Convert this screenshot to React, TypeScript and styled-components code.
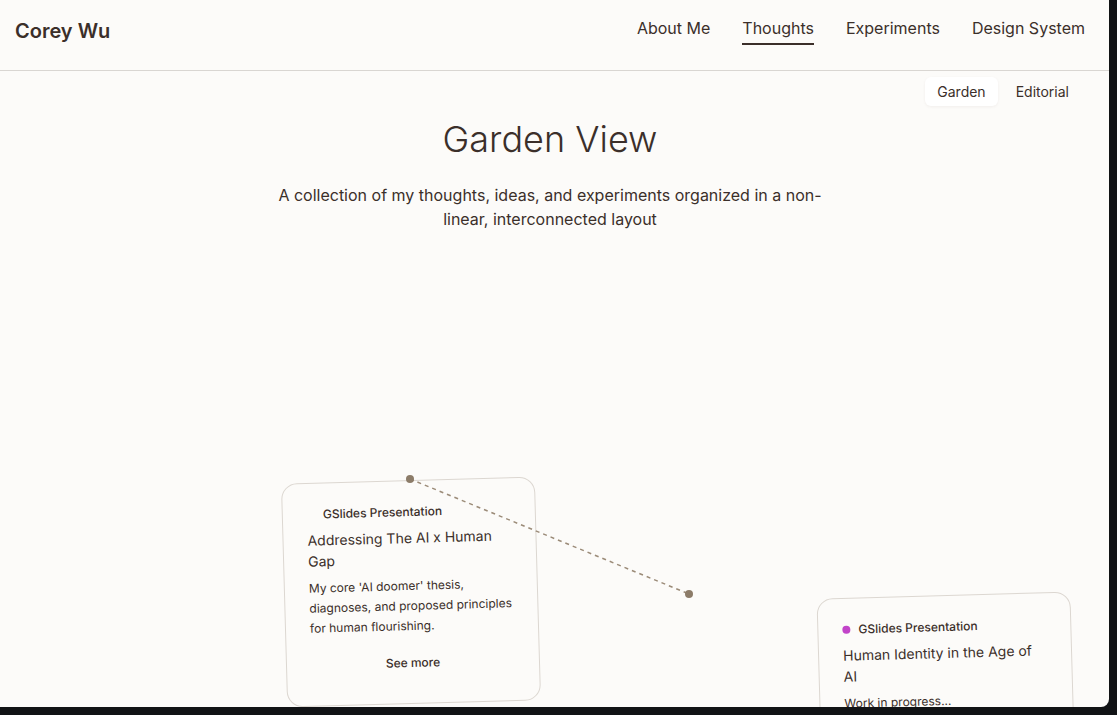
import React from "react";
import styled, { createGlobalStyle } from "styled-components";

const GlobalStyle = createGlobalStyle`
  html, body { margin: 0; padding: 0; background: #111315; }
  body {
    font-family: Inter, "Noto Sans", sans-serif;
    color: #3b2f2a;
    -webkit-font-smoothing: antialiased;
  }
  * { box-sizing: border-box; }
`;

const Window = styled.div`
  width: 1109px;
  height: 707px;
  background: #fcfbf9;
  overflow: hidden;
  border-bottom-right-radius: 8px;
`;

const Header = styled.header`
  height: 71px;
  display: flex;
  align-items: flex-start;
  justify-content: space-between;
  padding: 17px 24px 0 15px;
  border-bottom: 1px solid #d9d6d2;
`;

const Logo = styled.div`
  font-size: 20px;
  line-height: 28px;
  font-weight: 600;
  color: #3b2f2a;
`;

const Nav = styled.nav`
  display: flex;
  gap: 32px;
  margin-top: -1px;
`;

const NavLink = styled.a<{ $active?: boolean }>`
  font-size: 16px;
  line-height: 24px;
  color: #3b2f2a;
  text-decoration: none;
  padding-bottom: 3px;
  border-bottom: 2px solid ${(p) => (p.$active ? "#3b2f2a" : "transparent")};
`;

const ToggleRow = styled.div`
  display: flex;
  justify-content: flex-end;
  padding: 2px 24px 0;
`;

const Toggle = styled.div`
  display: flex;
  gap: 6px;
  padding: 4px;
`;

const ToggleButton = styled.button<{ $active?: boolean }>`
  font-family: inherit;
  font-size: 14px;
  line-height: 17px;
  padding: 6px 12px;
  border: none;
  border-radius: 6px;
  color: #3b2f2a;
  background: ${(p) => (p.$active ? "#ffffff" : "transparent")};
  box-shadow: ${(p) => (p.$active ? "0 1px 3px rgba(60, 40, 30, 0.06)" : "none")};
`;

const Hero = styled.section`
  width: 1100px;
  display: flex;
  flex-direction: column;
  align-items: center;
  text-align: center;
`;

const Title = styled.h1`
  margin: 7px 0 0;
  font-size: 36px;
  line-height: 44px;
  font-weight: 300;
  color: #3b2f2a;
`;

const Subtitle = styled.p`
  margin: 22px 0 0;
  max-width: 570px;
  font-size: 16px;
  line-height: 24px;
  color: #3b2f2a;
`;

const Canvas = styled.div`
  position: relative;
  height: 600px;
`;

const Card = styled.article<{ $x: number; $y: number; $rot: number }>`
  position: absolute;
  left: ${(p) => p.$x}px;
  top: ${(p) => p.$y}px;
  width: 254px;
  padding: 22px 24px 25px;
  border: 1px solid #dcd7d1;
  border-radius: 16px;
  background: #fcfbf9;
  transform: rotate(${(p) => p.$rot}deg);
  display: flex;
  flex-direction: column;
`;

const Meta = styled.div`
  display: flex;
  align-items: center;
  gap: 8px;
  font-size: 12px;
  line-height: 18px;
  font-weight: 500;
  color: #3b2f2a;
`;

const Dot = styled.span<{ $color: string }>`
  width: 8px;
  height: 8px;
  border-radius: 50%;
  background: ${(p) => p.$color};
  flex: none;
`;

const CardTitle = styled.h3`
  margin: 6px 0 0;
  font-size: 14px;
  line-height: 21px;
  font-weight: 400;
  color: #3b2f2a;
`;

const CardText = styled.p`
  margin: 7px 0 0;
  font-size: 12px;
  line-height: 20px;
  color: #3b2f2a;
`;

const SeeMore = styled.button`
  align-self: center;
  margin-top: 12px;
  font-family: inherit;
  font-size: 12px;
  line-height: 18px;
  font-weight: 500;
  padding: 6px 12px;
  border: none;
  background: transparent;
  color: #3b2f2a;
`;

const Links = styled.svg`
  position: absolute;
  left: 0;
  top: 0;
  width: 1109px;
  height: 600px;
  pointer-events: none;
  overflow: visible;
`;

export default function App() {
  return (
    <>
      <GlobalStyle />
      <Window>
        <Header>
          <Logo>Corey Wu</Logo>
          <Nav>
            <NavLink>About Me</NavLink>
            <NavLink $active>Thoughts</NavLink>
            <NavLink>Experiments</NavLink>
            <NavLink>Design System</NavLink>
          </Nav>
        </Header>
        <ToggleRow>
          <Toggle>
            <ToggleButton $active>Garden</ToggleButton>
            <ToggleButton>Editorial</ToggleButton>
          </Toggle>
        </ToggleRow>
        <Hero>
          <Title>Garden View</Title>
          <Subtitle>
            A collection of my thoughts, ideas, and experiments organized in a non-linear, interconnected layout
          </Subtitle>
        </Hero>
        <Canvas>
          <Card $x={284} $y={249} $rot={-1.6}>
            <Meta>
              <Dot $color="transparent" />
              GSlides Presentation
            </Meta>
            <CardTitle>Addressing The AI x Human Gap</CardTitle>
            <CardText>My core 'AI doomer' thesis, diagnoses, and proposed principles for human flourishing.</CardText>
            <SeeMore>See more</SeeMore>
          </Card>
          <Card $x={819} $y={364} $rot={-1.6}>
            <Meta>
              <Dot $color="#c244c9" />
              GSlides Presentation
            </Meta>
            <CardTitle>Human Identity in the Age of AI</CardTitle>
            <CardText>Work in progress...</CardText>
            <SeeMore>See more</SeeMore>
          </Card>
          <Links viewBox="0 0 1109 600">
            <line x1={410} y1={248} x2={689} y2={363} stroke="#9b8b78" strokeWidth={1.5} strokeDasharray="4 4" />
            <circle cx={410} cy={248} r={4} fill="#8c7c69" />
            <circle cx={689} cy={363} r={4} fill="#8c7c69" />
          </Links>
        </Canvas>
      </Window>
    </>
  );
}
